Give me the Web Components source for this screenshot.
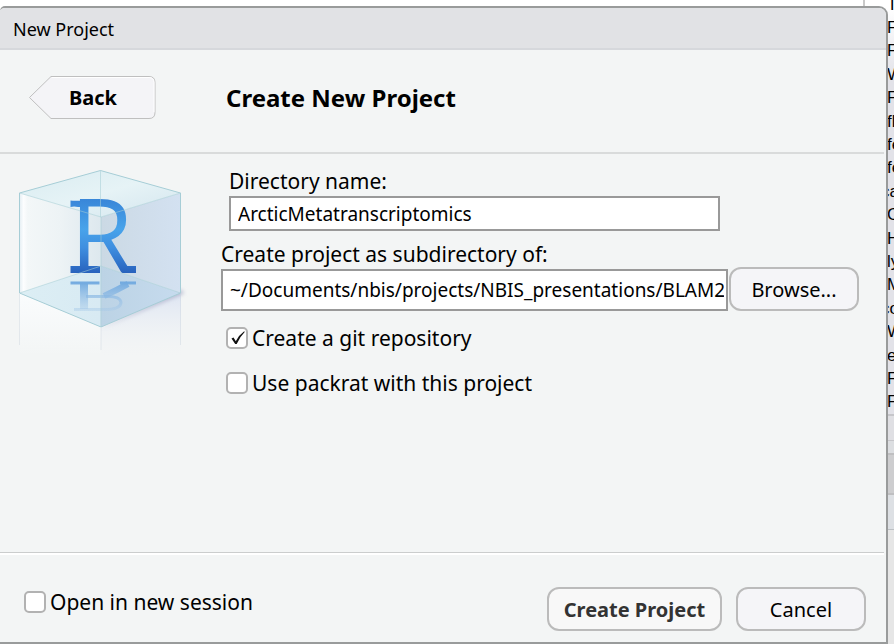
<!DOCTYPE html>
<html lang="en">
<head>
<meta charset="utf-8">
<title>New Project</title>
<style>
html, body { margin: 0; height: 100%; }
body { font-family: "Noto Sans", "Open Sans", sans-serif; font-size: 21px; color: #000; background: #fff; }
</style>
</head>
<body>
<project-screen></project-screen>

<template id="screen">
<style>
:host { display: grid; min-height: 100vh; overflow: hidden; }
app-backdrop, wizard-dialog { grid-area: 1 / 1; min-width: 0; }
wizard-dialog { margin: 6px 6px 0 0; z-index: 1; }
</style>
<app-backdrop></app-backdrop>
<wizard-dialog>
  <span slot="title">New Project</span>
  <page-header slot="header">Create New Project</page-header>
  <project-logo slot="art"></project-logo>
  <project-form slot="form"></project-form>
  <check-option slot="option">Open in new session</check-option>
  <push-button slot="actions" kind="primary">Create Project</push-button>
  <push-button slot="actions" kind="regular">Cancel</push-button>
</wizard-dialog>
</template>

<template id="backdrop">
<style>
:host { display: flex; justify-content: flex-end; height: 100vh; overflow: hidden; background: #fff; }
aside { width: 31px; border-left: 2px solid #c9c9c9; box-sizing: border-box; display: flex; flex-direction: column; background: linear-gradient(#fff 0, #fff 8px, #e2e2e8 80px); }
ul { list-style: none; margin: -7px 0 0; padding: 0 0 0 22px; height: 421px; display: flex; flex-direction: column; font: 17px "Liberation Sans", Arial, sans-serif; }
li { flex: 1; display: flex; align-items: center; white-space: nowrap; line-height: 20px; }
.cut { margin-left: -6px; }
.rule { height: 24px; background: #dfdfe3; border: solid #c6c6ca; border-width: 2px 0 1px; }
.gap { height: 12px; background: #dcdee1; }
.bar { height: 38px; background: #cdcdcf; border: solid #bfbfc1; border-width: 2px 0; }
.pane { height: 34px; background: #dde0e4; border-bottom: 1px solid #bcc0c4; }
.rest { flex: 1; background: #e6e6e6; }
</style>
<aside>
  <ul>
    <li>T</li><li>F</li><li>F</li><li>W</li><li>F</li><li>fl</li><li>fe</li><li>fe</li><li class="cut">ca</li>
    <li>C</li><li>H</li><li>ly</li><li>M</li><li class="cut">co</li><li>W</li><li>e</li><li>F</li><li>F</li>
  </ul>
  <div class="rule"></div><div class="gap"></div><div class="bar"></div><div class="pane"></div><div class="rest"></div>
</aside>
</template>

<template id="dialog">
<style>
:host { display: flex; flex-direction: column; box-sizing: border-box; border: 2px solid #999b9b; border-left: 0; border-radius: 5px 9px 0 0; background: #f3f5f5; overflow: hidden; }
.title { padding: 7px 13px 5px; background: #e1e2e5; border-bottom: 2px solid #d6d8dc; font-size: 18px; line-height: 28px; }
header { margin-right: 2px; border-bottom: 2px solid #d9dbdb; }
main { flex: 1; display: grid; grid-template-columns: 172px minmax(0, 1fr); column-gap: 33px; padding: 13px 27px 13px 16px; align-items: start; }
footer { margin-right: 2px; border-top: 1px solid #cbcdcd; box-shadow: inset 0 2px #fff; display: flex; justify-content: space-between; align-items: center; padding: 34px 18px 11px 24px; }
.option { align-self: flex-start; padding-top: 1px; }
.actions { display: flex; gap: 14px; }
</style>
<div class="title"><slot name="title"></slot></div>
<header><slot name="header"></slot></header>
<main><slot name="art"></slot><slot name="form"></slot></main>
<footer><div class="option"><slot name="option"></slot></div><div class="actions"><slot name="actions"></slot></div></footer>
</template>

<template id="header">
<style>
:host { display: flex; align-items: center; gap: 70px; padding: 25px 28px 32px; }
button { position: relative; display: block; width: 128px; height: 45px; padding: 0 0 0 2px; border: 0; background: none; font: bold 20px/28px "Noto Sans", sans-serif; color: #000; }
svg { position: absolute; inset: 0; }
button span { position: relative; }
h1 { margin: 0; font-size: 24px; line-height: 34px; font-weight: 700; white-space: nowrap; }
</style>
<button type="button">
  <svg width="128" height="45" viewBox="0 0 128 45" aria-hidden="true">
    <path d="M23 1.5H121q6 0 6 6V37.500q0 6-6 6H23L1.500 22.500Z" fill="#f4f4f7" stroke="#bfbfbf"/>
    <path d="M24 2.500H121q5 0 5 5V37" fill="none" stroke="#fff"/>
  </svg>
  <span>Back</span>
</button>
<h1><slot></slot></h1>
</template>

<template id="button">
<style>
:host { display: block; }
button { box-sizing: border-box; height: 44px; min-width: 130px; padding: 1px 12px 0; border: 2px solid #bbb; border-radius: 12px; background: #f5f5f8; font: 20px/28px "Noto Sans", sans-serif; color: #000; white-space: nowrap; }
:host([kind="primary"]) button { min-width: 175px; font-weight: 700; color: #333; background: #f8f8f8; }
</style>
<button type="button"><slot></slot></button>
</template>

<template id="check">
<style>
:host { display: block; }
label { display: flex; align-items: center; gap: 4px; line-height: 28px; white-space: nowrap; }
input { appearance: none; flex: none; width: 22px; height: 22px; box-sizing: border-box; margin: 0; border: 2px solid #b2b2b2; border-radius: 5px; background: #fff; }
.box { display: grid; }
.box > * { grid-area: 1 / 1; }
svg { pointer-events: none; visibility: hidden; }
input:checked + svg { visibility: visible; }
</style>
<label><span class="box"><input type="checkbox"><svg width="22" height="22" viewBox="0 0 22 22" aria-hidden="true"><path d="M5.500 11.500L7.500 10.500L9.800 14.200Q13 8 18.200 4.300L18.700 5Q14 9.500 10.700 17H9.200Z" fill="#111"/></svg></span><slot></slot></label>
</template>

<template id="form">
<style>
:host { display: grid; grid-template-columns: minmax(0, 1fr) auto; column-gap: 1px; }
.name { padding: 0 8px; }
label { display: block; line-height: 28px; margin-bottom: 1px; white-space: nowrap; }
input { display: block; width: 100%; box-sizing: border-box; height: 35px; margin: 0; padding: 0 2px 0 7px; border: 2px solid #999; border-radius: 0; background: #fff; font: 19px "Noto Sans", sans-serif; color: #000; }
.parent { margin-top: 9px; }
.parent input { height: 42px; }
push-button { align-self: end; }
.options { grid-column: 1 / -1; display: grid; gap: 17px; justify-items: start; padding: 13px 5px 0; }
</style>
<div class="name"><label for="name">Directory name:</label><input id="name" type="text" value="ArcticMetatranscriptomics" spellcheck="false"></div>
<span></span>
<div class="parent"><label for="parent">Create project as subdirectory of:</label><input id="parent" type="text" value="~/Documents/nbis/projects/NBIS_presentations/BLAM20" spellcheck="false"></div>
<push-button kind="regular">Browse...</push-button>
<div class="options">
  <check-option checked>Create a git repository</check-option>
  <check-option>Use packrat with this project</check-option>
</div>
</template>

<template id="logo">
<style>
:host { display: block; }
svg { display: block; }
text { font: 102px "Open Sans", "Noto Sans", sans-serif; }
</style>
<svg width="172" height="194" viewBox="16 167 172 194" role="img" aria-label="Project cube">
  <defs>
    <linearGradient id="top" x1="0" y1="0" x2="1" y2="1"><stop offset="0" stop-color="#d9ecf1"/><stop offset=".5" stop-color="#e6f3f6"/><stop offset="1" stop-color="#d3e5ee"/></linearGradient>
    <linearGradient id="left"><stop offset="0" stop-color="#e4eef3"/><stop offset=".05" stop-color="#fcfdfe"/><stop offset=".1" stop-color="#f3f7f8"/><stop offset=".5" stop-color="#edf3f5"/><stop offset="1" stop-color="#dde8ee"/></linearGradient>
    <linearGradient id="right"><stop offset="0" stop-color="#cbd9e4"/><stop offset="1" stop-color="#d3e1f1"/></linearGradient>
    <linearGradient id="floor"><stop offset="0" stop-color="#dceef4"/><stop offset=".5" stop-color="#d8eaf3"/><stop offset=".51" stop-color="#bcd3e5"/><stop offset="1" stop-color="#c6dbee"/></linearGradient>
    <linearGradient id="ink" gradientUnits="userSpaceOnUse" x1="0" y1="200" x2="0" y2="273"><stop offset="0" stop-color="#3987d9"/><stop offset=".4" stop-color="#48a3ea"/><stop offset=".65" stop-color="#3f8fe0"/><stop offset="1" stop-color="#2862bd"/></linearGradient>
    <linearGradient id="fade" x1="0" y1="0" x2="0" y2="1"><stop offset="0" stop-color="#dbe3f2" stop-opacity=".9"/><stop offset="1" stop-color="#eff2f6" stop-opacity="0"/></linearGradient>
    <linearGradient id="fadeLeft" x1="0" y1="0" x2="0" y2="1"><stop offset="0" stop-color="#fafcfd"/><stop offset="1" stop-color="#fafcfd" stop-opacity="0"/></linearGradient>
    <linearGradient id="echo" gradientUnits="userSpaceOnUse" x1="0" y1="281" x2="0" y2="312"><stop offset="0" stop-color="#6fa8df"/><stop offset="1" stop-color="#a6c9e8" stop-opacity=".35"/></linearGradient>
    <filter id="soft" x="-10%" y="-30%" width="120%" height="160%"><feGaussianBlur stdDeviation="2"/></filter>
  </defs>
  <path d="M19.500 293L101 327V356H19.500Z" fill="url(#fadeLeft)"/>
  <path d="M101 327L181 293V356H101Z" fill="url(#fade)"/>
  <path d="M101 328L184 293L181 290Z" fill="#a9acc8" filter="url(#soft)"/>
  <path d="M19.500 193L101 217V266L19.500 293Z" fill="url(#left)"/>
  <path d="M101 217L180.500 193V293L101 266Z" fill="url(#right)"/>
  <path d="M101 266L180.500 293L101 327L19.500 293Z" fill="url(#floor)"/>
  <path d="M100.500 170.500L180.500 193L101 217L19.500 193Z" fill="url(#top)"/>
  <g fill="none" stroke="url(#echo)">
    <path d="M70.500 282.900L99.500 283M120 282.900L136 283" stroke-width="3"/>
    <path d="M84 283L84.100 309" stroke-width="8"/>
    <path d="M128 284Q117 290 104 296" stroke-width="6"/>
    <path d="M86 296.500H106Q121 296 121 303Q120 309.500 105 309.500H74" stroke-width="3"/>
  </g>
  <g fill="url(#ink)">
    <text x="70" y="273">R</text>
    <path d="M70.500 200.500Q76 201.200 84 200.200V207H78Q74 206 70.500 207Z"/>
    <path d="M70.500 266H100V273H70.500ZM122 266H136V273H122Z"/>
  </g>
  <g fill="none" stroke="#a6cdd6" stroke-width="1">
    <path d="M100.500 170.500L180.500 193V293L101 327L19.500 293V193Z"/>
    <path d="M19.500 193L101 217L180.500 193M101 217V327M100.500 170.500V217M19.500 293L101 266L180.500 293" stroke-opacity=".55"/>
    <path d="M19.500 294V345M101 328V350M180.500 294V345" stroke="#c9d2dd" stroke-opacity=".4"/>
  </g>
</svg>
</template>

<script>
function define(name, id, setup) {
  customElements.define(name, class extends HTMLElement {
    constructor() {
      super();
      const root = this.attachShadow({ mode: 'open' });
      root.append(document.getElementById(id).content.cloneNode(true));
    }
    connectedCallback() { if (setup) setup(this); }
  });
}
define('push-button', 'button');
define('check-option', 'check', el => {
  el.shadowRoot.querySelector('input').checked = el.hasAttribute('checked');
});
define('project-logo', 'logo');
define('project-form', 'form');
define('page-header', 'header');
define('wizard-dialog', 'dialog');
define('app-backdrop', 'backdrop');
define('project-screen', 'screen');
</script>
</body>
</html>
